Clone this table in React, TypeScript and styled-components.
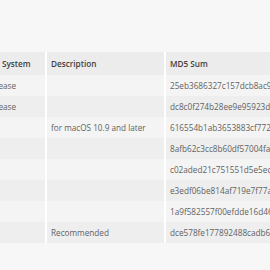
import styled, { createGlobalStyle } from "styled-components";

const GlobalStyle = createGlobalStyle`
    html, body {
        margin: 0;
        padding: 0;
        background: #f7f7f7;
    }
    body {
        font-family: "Open Sans", "Liberation Sans", sans-serif;
    }
`;

const Page = styled.main`
    width: 270px;
    height: 270px;
    overflow: hidden;
    padding-top: 52px;
    box-sizing: border-box;
`;

const Table = styled.table`
    margin-left: -44px;
    border-collapse: collapse;
    table-layout: fixed;
    width: 420px;
    font-size: 8.2px;
`;

const Head = styled.th<{ $w: number }>`
    width: ${(p) => p.$w}px;
    height: 23px;
    padding: 0 4px;
    box-sizing: border-box;
    background: #ececec;
    color: #3f3f3f;
    font-weight: 600;
    text-align: left;
    white-space: nowrap;
    overflow: hidden;
    border-right: 2px solid #fff;
`;

const Row = styled.tr<{ $dark: boolean }>`
    background: ${(p) => (p.$dark ? "#eeeeee" : "#f4f4f4")};
`;

const Cell = styled.td`
    height: 21px;
    padding: 0 4px;
    color: #626262;
    white-space: nowrap;
    overflow: hidden;
    border-right: 2px solid #fff;
`;

const files = [
    { os: "Source release", desc: "", md5: "25eb3686327c157dcb8ac9f01105c306" },
    { os: "Source release", desc: "", md5: "dc8c0f274b28ee9e95923d20cfc364c9" },
    { os: "Mac OS X", desc: "for macOS 10.9 and later", md5: "616554b1ab3653883cf7720d3a24ed4c" },
    { os: "Windows", desc: "", md5: "8afb62c3cc8b60df57004fa0a38d5364" },
    { os: "Windows", desc: "", md5: "c02aded21c751551d5e5ec6e6b37b8f9" },
    { os: "Windows", desc: "", md5: "e3edf06be814af719e7f77a9fc0d7b1a" },
    { os: "Windows", desc: "", md5: "1a9f582557f00efdde16d461e4f46eb5" },
    { os: "Windows", desc: "Recommended", md5: "dce578fe177892488cadb6c34aea58ee" },
];

function App() {
    return (
        <>
            <GlobalStyle />
            <Page>
                <Table>
                    <thead>
                        <tr>
                            <Head $w={90}>Operating System</Head>
                            <Head $w={119}>Description</Head>
                            <Head $w={211}>MD5 Sum</Head>
                        </tr>
                    </thead>
                    <tbody>
                        {files.map((f, i) => (
                            <Row key={f.md5} $dark={i % 2 === 1}>
                                <Cell>{f.os}</Cell>
                                <Cell>{f.desc}</Cell>
                                <Cell>{f.md5}</Cell>
                            </Row>
                        ))}
                    </tbody>
                </Table>
            </Page>
        </>
    );
}

export default App;
